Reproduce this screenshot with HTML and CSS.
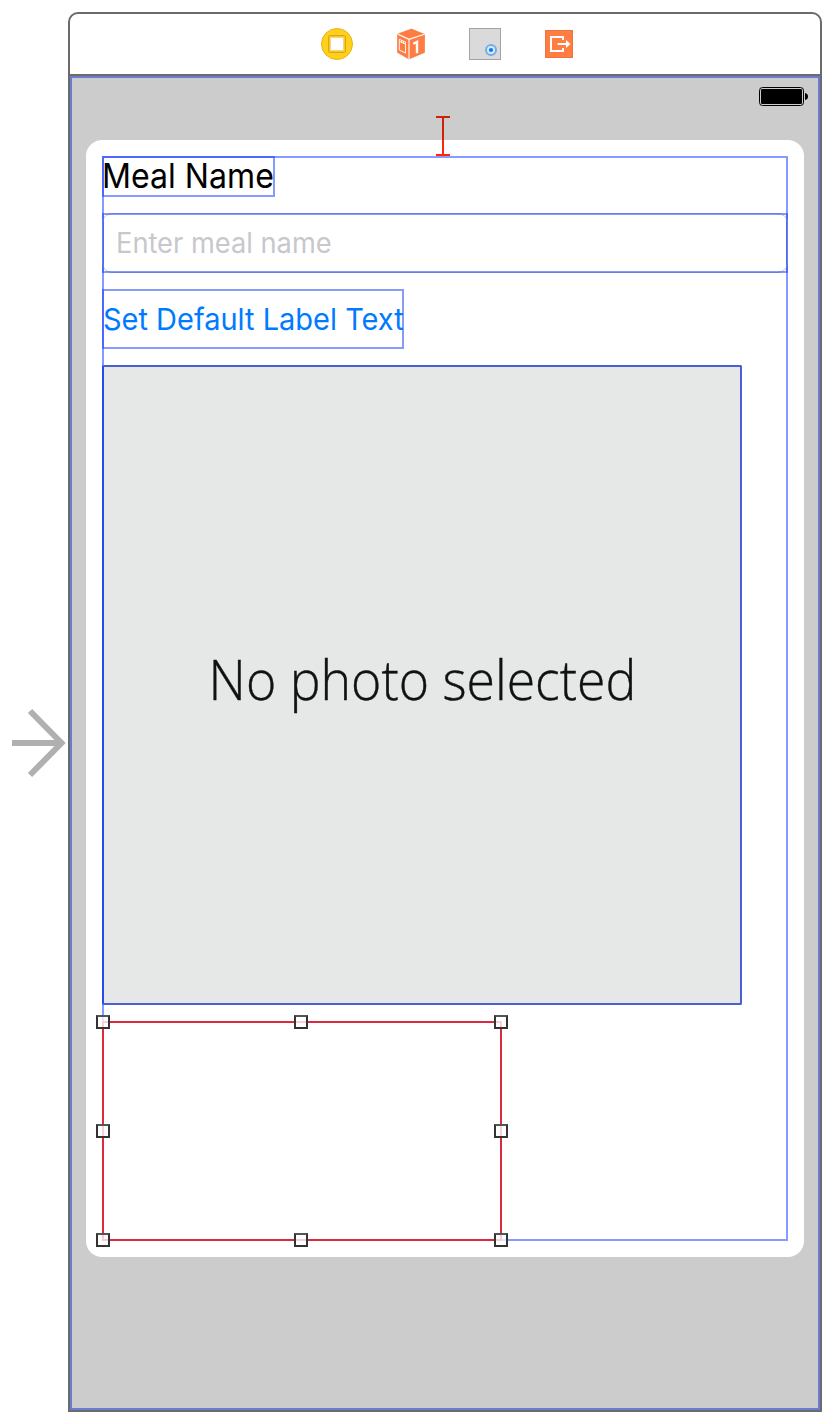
FILE: index.html
```html
<!DOCTYPE html>
<html lang="en">
<head>
<meta charset="utf-8">
<title>Meal scene</title>
<link rel="stylesheet" href="styles.css">
</head>
<body>
<main class="canvas">
  <div class="entry">
    <svg width="56" height="70" viewBox="0 0 56 70" fill="none" stroke="#b0b0b0" stroke-width="6"><path d="M0 35H49M18 3L49.5 35L18 67"/></svg>
  </div>
  <section class="scene">
    <header class="dock">
      <svg width="32" height="32" viewBox="0 0 32 32"><circle cx="16" cy="16" r="15.5" fill="#ffd01c" stroke="#e9b21c"/><rect x="7.5" y="7.5" width="17" height="17" rx="1" fill="#fbca18" stroke="#dda414"/><rect x="9" y="9" width="14" height="14" fill="#fff"/><rect x="9.5" y="9.5" width="13" height="13" fill="none" stroke="#e3a90f" stroke-width="1" stroke-dasharray="1 1"/></svg>
      <svg width="32" height="32" viewBox="0 0 32 32"><path d="M16.5 1L29.5 6.3V24.4L14 31L2.5 24.5V6Z" fill="#ff7c42" stroke="#e87440" stroke-width=".6"/><path d="M2.5 6L14 11.3L29.5 6.3M14 11.3V31" fill="none" stroke="#fff" stroke-width="1.1"/><path d="M4.3 11.3L10.5 14V25L4.3 22ZM4.5 13.5L10.5 16M6.5 12.5V14.5M8.5 13V15.5" fill="none" stroke="#fff" stroke-width=".9"/><path d="M18.3 15.8L22 13.9V25.3" fill="none" stroke="#fff" stroke-width="2.4"/></svg>
      <svg width="32" height="32" viewBox="0 0 32 32"><rect x=".5" y=".5" width="31" height="31" fill="#dadada" stroke="#a3a3a3"/><circle cx="22" cy="22" r="5" fill="#dce7f1" stroke="#70adec" stroke-width="2"/><circle cx="22" cy="22" r="2.1" fill="#0a7cf5"/></svg>
      <svg width="32" height="32" viewBox="0 0 32 32"><rect x="2.5" y="2.5" width="27" height="27" fill="#ff7d41" stroke="#e97541"/><path d="M20 12V9H8V23H20V20M14.5 16H24" fill="none" stroke="#fff" stroke-width="2"/><path d="M23 12L27.5 16L23 20Z" fill="#fff"/></svg>
    </header>
    <div class="view">
      <div class="status">
        <svg width="50" height="20" viewBox="0 0 50 20"><rect x=".5" y=".5" width="44" height="18" rx="3" fill="#ccc" stroke="#000"/><rect x="2" y="2" width="41" height="15" rx="1.3"/><path d="M46 6Q49 6.5 49 9.5T46 13Z"/></svg>
      </div>
      <div class="card">
        <div class="stack">
          <div class="label outlined"><span class="label-text">Meal Name</span></div>
          <div class="field outlined"><span class="placeholder">Enter meal name</span></div>
          <div class="button outlined"><span class="button-text">Set Default Label Text</span></div>
          <div class="photo"><span class="photo-text">No photo selected</span></div>
          <div class="control">
            <i class="handle top left"></i><i class="handle top center"></i><i class="handle top right"></i>
            <i class="handle middle left"></i><i class="handle middle right"></i>
            <i class="handle bottom left"></i><i class="handle bottom center"></i><i class="handle bottom right"></i>
          </div>
        </div>
        <svg class="constraint" width="14" height="40" viewBox="0 0 14 40" fill="none" stroke-width="2"><path d="M0 1H14M7 2V24" stroke="#d02007"/><path d="M7 24V38M0 39H14" stroke="#ff2609"/></svg>
      </div>
    </div>
  </section>
</main>
</body>
</html>
```

FILE: styles.css
```css
* { box-sizing: border-box; }
body { margin: 0; background: #fff; font-family: Inter, "Liberation Sans", sans-serif; }
.canvas { display: flex; height: 1424px; padding: 12px 12px 12px 0; }
.entry { width: 68px; padding: 696px 0 0 12px; }
.entry svg, .dock svg, .status svg { display: block; }
.scene { display: flex; flex-direction: column; width: 754px; height: 1400px; border: 2px solid #6b6b6b; border-radius: 10px 10px 0 0; }
.dock { display: flex; justify-content: center; gap: 42px; height: 62px; padding: 14px 0 0 6px; border-bottom: 2px solid #6b6b6b; }
.view { flex: 1; background: #ccc; border: 2px solid #6b7bcf; padding: 0 14px; }
.status { display: flex; justify-content: flex-end; height: 62px; padding: 9px 0 0; margin-right: -5px; }
.card { position: relative; height: 1117px; padding: 16px; background: #fff; border-radius: 16px; }
.stack { display: flex; flex-direction: column; align-items: flex-start; gap: 16px; height: 1085px; box-shadow: inset 0 0 0 2px #879bff; }
.outlined { box-shadow: inset 0 0 0 2px rgba(16, 56, 255, .5); }
.label-text, .placeholder, .button-text, .photo-text { display: inline-block; white-space: nowrap; transform-origin: left center; }
.label { width: 173px; height: 41px; }
.label-text { font-size: 33.5px; line-height: 41px; color: #000; transform: scaleX(.958); }
.field { position: relative; display: flex; align-items: center; width: 686px; height: 60px; padding-left: 14px; }
.field::before { content: ""; position: absolute; inset: 0; border: 1px solid #c4c4c4; border-radius: 10px; }
.field.outlined::after { content: ""; position: absolute; inset: 0; border: 2px solid rgba(16, 56, 255, .5); }
.field.outlined { box-shadow: none; }
.placeholder { font-size: 28px; color: #c7c7cc; transform: scaleX(.973); }
.button { display: flex; align-items: center; width: 302px; height: 60px; padding-left: 1px; }
.button-text { font-size: 30px; color: #007aff; transform: scaleX(.966); }
.photo { display: flex; align-items: center; justify-content: center; width: 640px; height: 640px; padding-bottom: 14px; background: #e5e8e6; border: 2px solid #4961d0; border-left-color: #264aed; border-radius: 2px; }
.photo-text { font-family: "Open Sans", "Noto Sans", sans-serif; font-weight: 300; font-size: 56px; line-height: 70px; color: #111; transform-origin: center; transform: scaleX(.924); -webkit-text-stroke: .4px #111; }
.control { position: relative; width: 400px; height: 220px; border: 2px solid #dc2b3f; }
.handle { position: absolute; width: 14px; height: 14px; border: 2px solid #333; border-top-color: #555; background: rgba(255, 255, 255, .78); }
.top { top: -8px; }
.middle { top: 101px; }
.bottom { bottom: -8px; }
.left { left: -8px; }
.center { left: 190px; }
.right { right: -8px; }
.constraint { position: absolute; left: 350px; top: -24px; }
```
